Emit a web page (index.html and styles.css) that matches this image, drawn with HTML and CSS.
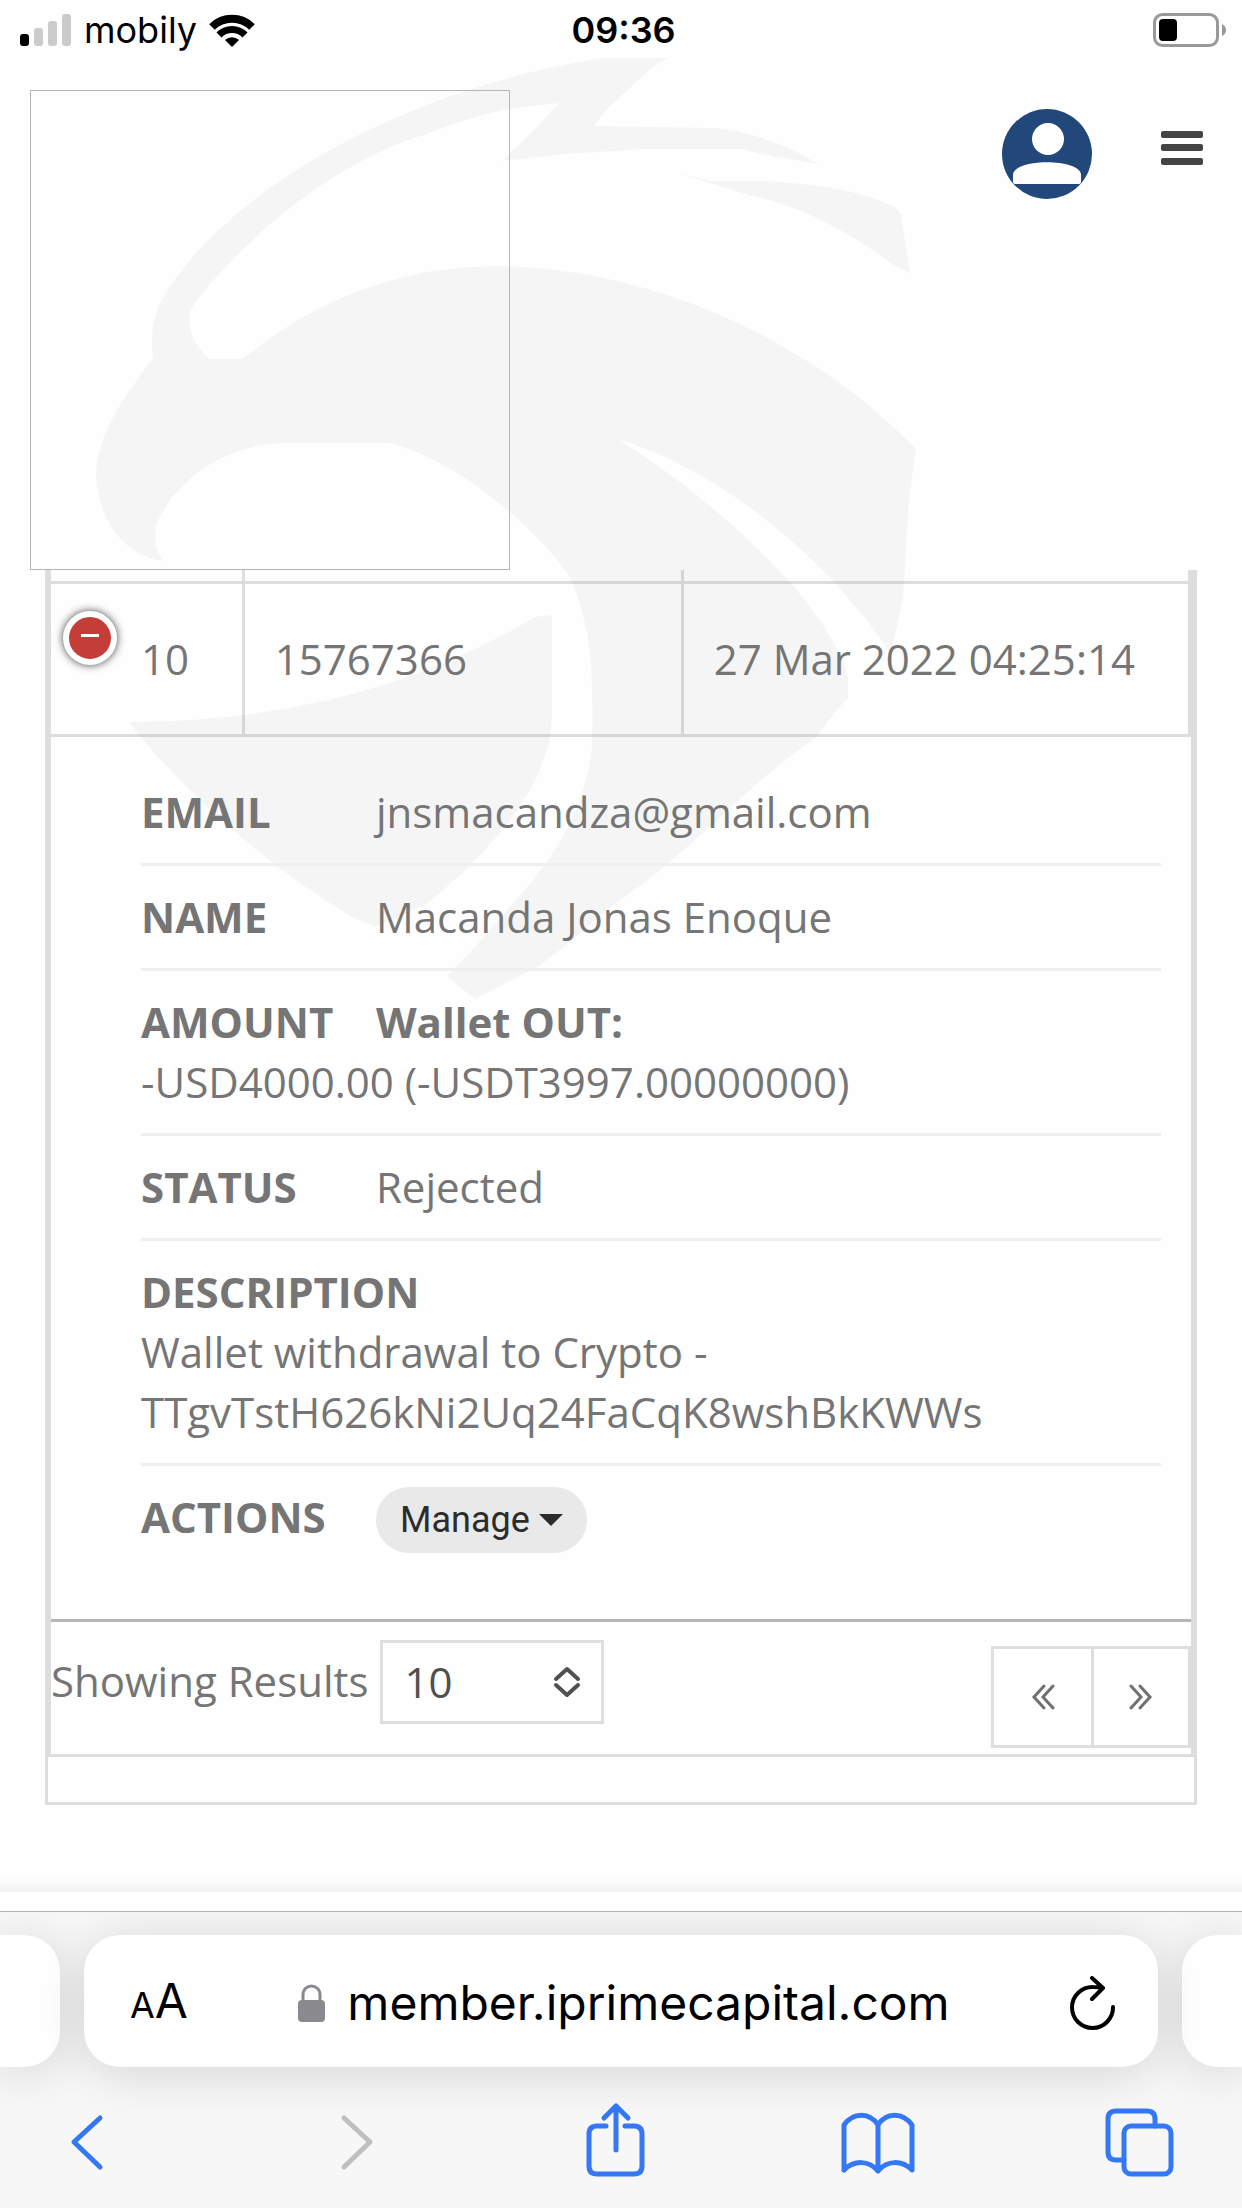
FILE: index.html
```html
<!DOCTYPE html>
<html lang="en">
<head>
<meta charset="utf-8">
<meta name="viewport" content="width=device-width, initial-scale=1">
<title>Member transactions</title>
<link rel="stylesheet" href="styles.css">
</head>
<body>
<svg class="watermark" viewBox="0 0 1242 1010" aria-hidden="true">
  <path d="M668 58H602C400 90 230 190 166 293Q148 320 153 358C130 390 97 430 96 475C98 510 115 553 163 561Q152 545 156 525C175 480 225 444 284 443H390C470 465 545 540 570 577C590 625 594 660 592 747C585 810 555 855 523 892L475 947L447 976L475 999L539 966Q580 935 610 907C690 855 750 780 816 738Q840 705 848 698V678C830 600 700 490 618 439C720 470 830 560 891 654L903 598L909 499L916 449C830 360 680 270 500 266C400 266 320 300 261 345L242 359H210Q186 340 190 310C225 260 320 165 427 134Q465 118 508 109L559 103L537 127L502 161L565 154L645 149H740L772 156L818 164Q770 134 714 128L594 126L605 111L651 68Z"/>
  <path d="M677 173L710 181H760Q850 185 895 207L901 215L910 273L892 264Q820 210 749 195Z"/>
  <path d="M129 722Q360 722 535 617L552 615V713C552 790 480 860 428 903L376 927L352 917Q240 850 143 740Z"/>
</svg>

<div class="status-bar">
  <div class="carrier">
    <svg width="52" height="32" viewBox="0 0 52 32" aria-hidden="true">
      <rect x="0" y="20" width="9" height="12" rx="3" fill="#000"/>
      <g fill="#cbcbcb"><rect x="14" y="14" width="9" height="18" rx="3"/><rect x="28" y="7" width="9" height="25" rx="3"/><rect x="42" y="0" width="9" height="32" rx="3"/></g>
    </svg>
    <span>mobily</span>
    <svg width="46" height="33" viewBox="0 0 46 33" aria-hidden="true">
      <path d="M3 13A28.500 28.500 0 0 1 43 13" fill="none" stroke="#000" stroke-width="8"/>
      <path d="M10 21A18 18 0 0 1 36 21" fill="none" stroke="#000" stroke-width="7"/>
      <path d="M23 33L16 26A10 10 0 0 1 30 26Z"/>
    </svg>
  </div>
  <span class="clock">09:36</span>
  <svg class="battery" width="74" height="34" viewBox="0 0 74 34" aria-hidden="true">
    <rect x="1.500" y="1.500" width="63" height="31" rx="8" fill="#fff" stroke="#999" stroke-width="3"/>
    <rect x="6" y="6" width="18" height="22" rx="4"/>
    <path d="M69 11Q73 13 73 17T69 23Z" fill="#999"/>
  </svg>
</div>

<header class="site-header">
  <div class="logo"></div>
  <div class="header-tools">
    <button class="plain" type="button" aria-label="Account">
      <svg width="90" height="90" viewBox="0 0 90 90" aria-hidden="true">
        <circle cx="45" cy="45" r="45" fill="#21477b"/>
        <circle cx="46" cy="30" r="16" fill="#fff"/>
        <path d="M11 73V66C11 49 79 49 79 66V73Q79 75 77 75H13Q11 75 11 73Z" fill="#fff"/>
      </svg>
    </button>
    <button class="plain menu" type="button" aria-label="Menu">
      <svg width="42" height="34" viewBox="0 0 42 34" fill="#444" aria-hidden="true"><rect width="42" height="7" rx="2"/><rect y="13" width="42" height="7" rx="2"/><rect y="27" width="42" height="7" rx="2"/></svg>
    </button>
  </div>
</header>

<main class="card">
  <div class="panel">
    <table class="records">
      <colgroup><col class="col-index"><col class="col-id"><col></colgroup>
      <tbody>
        <tr class="previous"><td></td><td></td><td></td></tr>
        <tr class="record">
          <td class="index"><button class="toggle" type="button" aria-label="Collapse"></button>10</td>
          <td>15767366</td>
          <td>27 Mar 2022 04:25:14</td>
        </tr>
        <tr>
          <td class="details" colspan="3">
            <ul class="fields">
              <li><span class="label">EMAIL</span> jnsmacandza@gmail.com</li>
              <li><span class="label">NAME</span> Macanda Jonas Enoque</li>
              <li><span class="label">AMOUNT</span> <b>Wallet OUT:</b><br>-USD4000.00 (-USDT3997.00000000)</li>
              <li><span class="label">STATUS</span> Rejected</li>
              <li><span class="label">DESCRIPTION</span><br>Wallet withdrawal to Crypto -<br>TTgvTstH626kNi2Uq24FaCqK8wshBkKWWs</li>
              <li class="actions"><span class="label">ACTIONS</span> <button class="manage" type="button">Manage <svg width="24" height="12" viewBox="0 0 24 12" aria-hidden="true"><path d="M0 0H24L12 12Z" fill="#2c2c2c"/></svg></button></li>
            </ul>
          </td>
        </tr>
      </tbody>
    </table>
    <div class="pager">
      <label for="page-size">Showing Results</label>
      <div class="select-box">
        <select id="page-size"><option>10</option><option>25</option><option>50</option></select>
        <svg width="28" height="32" viewBox="0 0 28 32" fill="none" stroke="#505050" stroke-width="4" stroke-linecap="round" stroke-linejoin="round" aria-hidden="true"><path d="M3 13L14 3L25 13M3 19L14 29L25 19"/></svg>
      </div>
      <div class="pages">
        <button type="button" aria-label="Previous"><svg width="24" height="26" viewBox="0 0 24 26" aria-hidden="true"><path d="M13 2L3 13L13 24M22 2L12 13L22 24"/></svg></button>
        <button type="button" aria-label="Next"><svg width="24" height="26" viewBox="0 0 24 26" aria-hidden="true"><path d="M2 2L12 13L2 24M11 2L21 13L11 24"/></svg></button>
      </div>
    </div>
  </div>
</main>

<footer class="browser">
  <div class="shade"></div>
  <div class="toolbar">
    <div class="tabs">
      <div class="tab tab-prev"></div>
      <div class="tab address">
        <button class="plain text-size" type="button"><small>A</small>A</button>
        <div class="url">
          <svg width="27" height="38" viewBox="0 0 27 38" aria-hidden="true"><rect y="16" width="27" height="22" rx="4" fill="#8a8a8e"/><path d="M5 18V11C5 -1 22 -1 22 11V18" fill="none" stroke="#8a8a8e" stroke-width="3"/></svg>
          <span>member.iprimecapital.com</span>
        </div>
        <button class="plain reload" type="button" aria-label="Reload">
          <svg width="46" height="54" viewBox="0 0 46 54" fill="none" stroke="#000" stroke-width="4" stroke-linecap="round" stroke-linejoin="round" aria-hidden="true"><path d="M43 31A20.500 20.500 0 1 1 23 11Q28 11 33 12M22 2L33 12L22 23"/></svg>
        </button>
      </div>
      <div class="tab tab-next"></div>
    </div>
    <nav class="nav">
      <button class="plain" type="button" aria-label="Back"><svg viewBox="0 0 80 80"><path d="M53 16L27 40L53 65"/></svg></button>
      <button class="plain disabled" type="button" aria-label="Forward"><svg viewBox="0 0 80 80"><path d="M34 16L60 40L34 65"/></svg></button>
      <button class="plain" type="button" aria-label="Share"><svg viewBox="0 0 80 80"><path d="M32 24H23Q15 24 15 32V64Q15 72 23 72H60Q68 72 68 64V32Q68 24 60 24H51M42 48V4M30 16L42 4L54 16"/></svg></button>
      <button class="plain" type="button" aria-label="Bookmarks"><svg viewBox="0 0 80 80"><path d="M7 68V23C16 10 33 10 41 23C49 10 66 10 75 23V68C65 58 50 58 41 69C32 58 17 58 7 68M41 23V69"/></svg></button>
      <button class="plain" type="button" aria-label="Tabs"><svg viewBox="0 0 80 80"><path d="M24 58H16Q8 58 8 50V17Q8 9 16 9H47Q55 9 55 17V24"/><rect x="24" y="24" width="47" height="48" rx="7"/></svg></button>
    </nav>
  </div>
</footer>
</body>
</html>
```
FILE: styles.css
```css
* { box-sizing: border-box; }

body {
  position: relative;
  display: flex;
  flex-direction: column;
  min-height: 100vh;
  margin: 0;
  background: #fefefe;
  color: #757575;
  font: 42px/60px "Open Sans", sans-serif;
}

svg { display: block; }

button, select { font: inherit; color: inherit; }

.plain {
  padding: 0;
  border: 0;
  background: none;
}

.watermark {
  position: absolute;
  z-index: -1;
  top: 0;
  left: 0;
  width: 100%;
  fill: #f5f5f5;
}

/* Phone status bar */
.status-bar {
  display: grid;
  grid-template-columns: 1fr auto 1fr;
  align-items: center;
  height: 60px;
  padding: 0 15px 0 20px;
  color: #000;
  font: 36px/60px Inter, sans-serif;
}

.carrier {
  display: flex;
  align-items: center;
  gap: 12px;
}

.clock { font-weight: 600; }

.battery { justify-self: end; }

/* Site header */
.site-header {
  display: flex;
  justify-content: space-between;
  padding: 30px 39px 0 30px;
}

.logo {
  width: 480px;
  height: 480px;
  border: 1px solid #b6b6b6;
}

.header-tools {
  display: flex;
  align-items: flex-start;
  gap: 69px;
  padding-top: 19px;
}

.menu { margin-top: 22px; }

/* Records */
.card {
  margin: 0 45px;
  padding-bottom: 45px;
  border: solid rgba(0, 0, 0, .13);
  border-width: 0 3px 3px;
}

.panel {
  border: solid rgba(0, 0, 0, .13);
  border-width: 0 3px 3px;
}

.records {
  width: 100%;
  table-layout: fixed;
  border-spacing: 0;
}

.col-index { width: 17%; }
.col-id { width: 38.5%; }

.records td {
  padding: 0 0 0 30px;
  border: solid rgba(0, 0, 0, .13);
  border-width: 0 3px 3px 0;
}

.previous td { height: 14px; }
.record td { height: 153px; }

.records .index {
  position: relative;
  padding-left: 90px;
}

.toggle {
  position: absolute;
  top: 27px;
  left: 12px;
  display: grid;
  place-items: center;
  width: 54px;
  height: 54px;
  padding: 0 0 6px;
  border: 6px solid #fff;
  border-radius: 50%;
  background: #c43d38;
  box-shadow: 0 0 9px #444;
}

.toggle::before {
  content: "";
  width: 18px;
  height: 3px;
  background: #fff;
}

.records .details {
  padding: 24px 30px 45px 90px;
  border-width: 0 0 3px;
  border-color: #b6b6b6;
}

.fields {
  margin: 0;
  padding: 0;
  list-style: none;
}

.fields li {
  padding: 21px 0;
  border-bottom: 3px solid #efefef;
}

.fields .actions {
  display: flex;
  gap: 11px;
  border-bottom: 0;
}

.label {
  display: inline-block;
  min-width: 224px;
  font-weight: 700;
}

.manage {
  display: flex;
  align-items: center;
  gap: 9px;
  height: 66px;
  padding: 0 24px;
  border: 0;
  border-radius: 33px;
  background: #e9e9e9;
  color: #2c2c2c;
  font: 36px/66px Roboto, sans-serif;
}

/* Pagination */
.pager {
  display: flex;
  align-items: flex-start;
  height: 132px;
}

.pager label { margin: 29px 11px 0 0; }

.select-box {
  position: relative;
  width: 224px;
  margin-top: 18px;
}

.select-box select {
  width: 100%;
  height: 84px;
  padding: 0 22px;
  border: 3px solid #dedede;
  border-radius: 0;
  background: #fefefe;
  color: #505050;
  appearance: none;
}

.select-box svg {
  position: absolute;
  top: 26px;
  right: 23px;
  pointer-events: none;
}

.pages {
  display: flex;
  margin: 24px 0 0 auto;
  border: 3px solid #dedede;
}

.pages button {
  display: grid;
  place-items: center;
  width: 97px;
  height: 96px;
  padding: 0;
  border: 0;
  background: none;
}

.pages button + button { border-left: 3px solid #dedede; }

.pages svg {
  fill: none;
  stroke: #707070;
  stroke-width: 3;
  stroke-linecap: round;
}

/* Browser chrome */
.browser { margin-top: auto; }

.shade {
  height: 34px;
  background: linear-gradient(#fefefe, #f2f2f2) top / 100% 15px no-repeat;
}

.toolbar {
  overflow: hidden;
  padding-top: 23px;
  border-top: 1px solid #b4b4b4;
  background: #f7f7f8;
}

.tabs {
  display: grid;
  grid-template-columns: 60px 1fr 60px;
  gap: 24px;
}

.tab {
  height: 132px;
  border-radius: 36px;
  background: #fff;
  box-shadow: 0 6px 50px rgba(0, 0, 0, .14);
}

.tab-prev { border-radius: 0 36px 36px 0; }
.tab-next { border-radius: 36px 0 0 36px; }

.address {
  position: relative;
  display: flex;
  align-items: center;
  justify-content: space-between;
  padding: 4px 42px 0 46px;
  color: #000;
  font: 48px/60px Inter, sans-serif;
}

.text-size {
  width: 48px;
  white-space: nowrap;
}

.text-size small { font-size: 36px; }

.url {
  display: flex;
  align-items: center;
  gap: 22px;
}

.nav {
  display: flex;
  justify-content: space-between;
  padding: 35px 62px 26px 47px;
}

.nav svg {
  width: 80px;
  height: 80px;
  fill: none;
  stroke: #3478f6;
  stroke-width: 5;
  stroke-linecap: round;
  stroke-linejoin: round;
}

.nav .disabled svg { stroke: #bfbfbf; }
```
